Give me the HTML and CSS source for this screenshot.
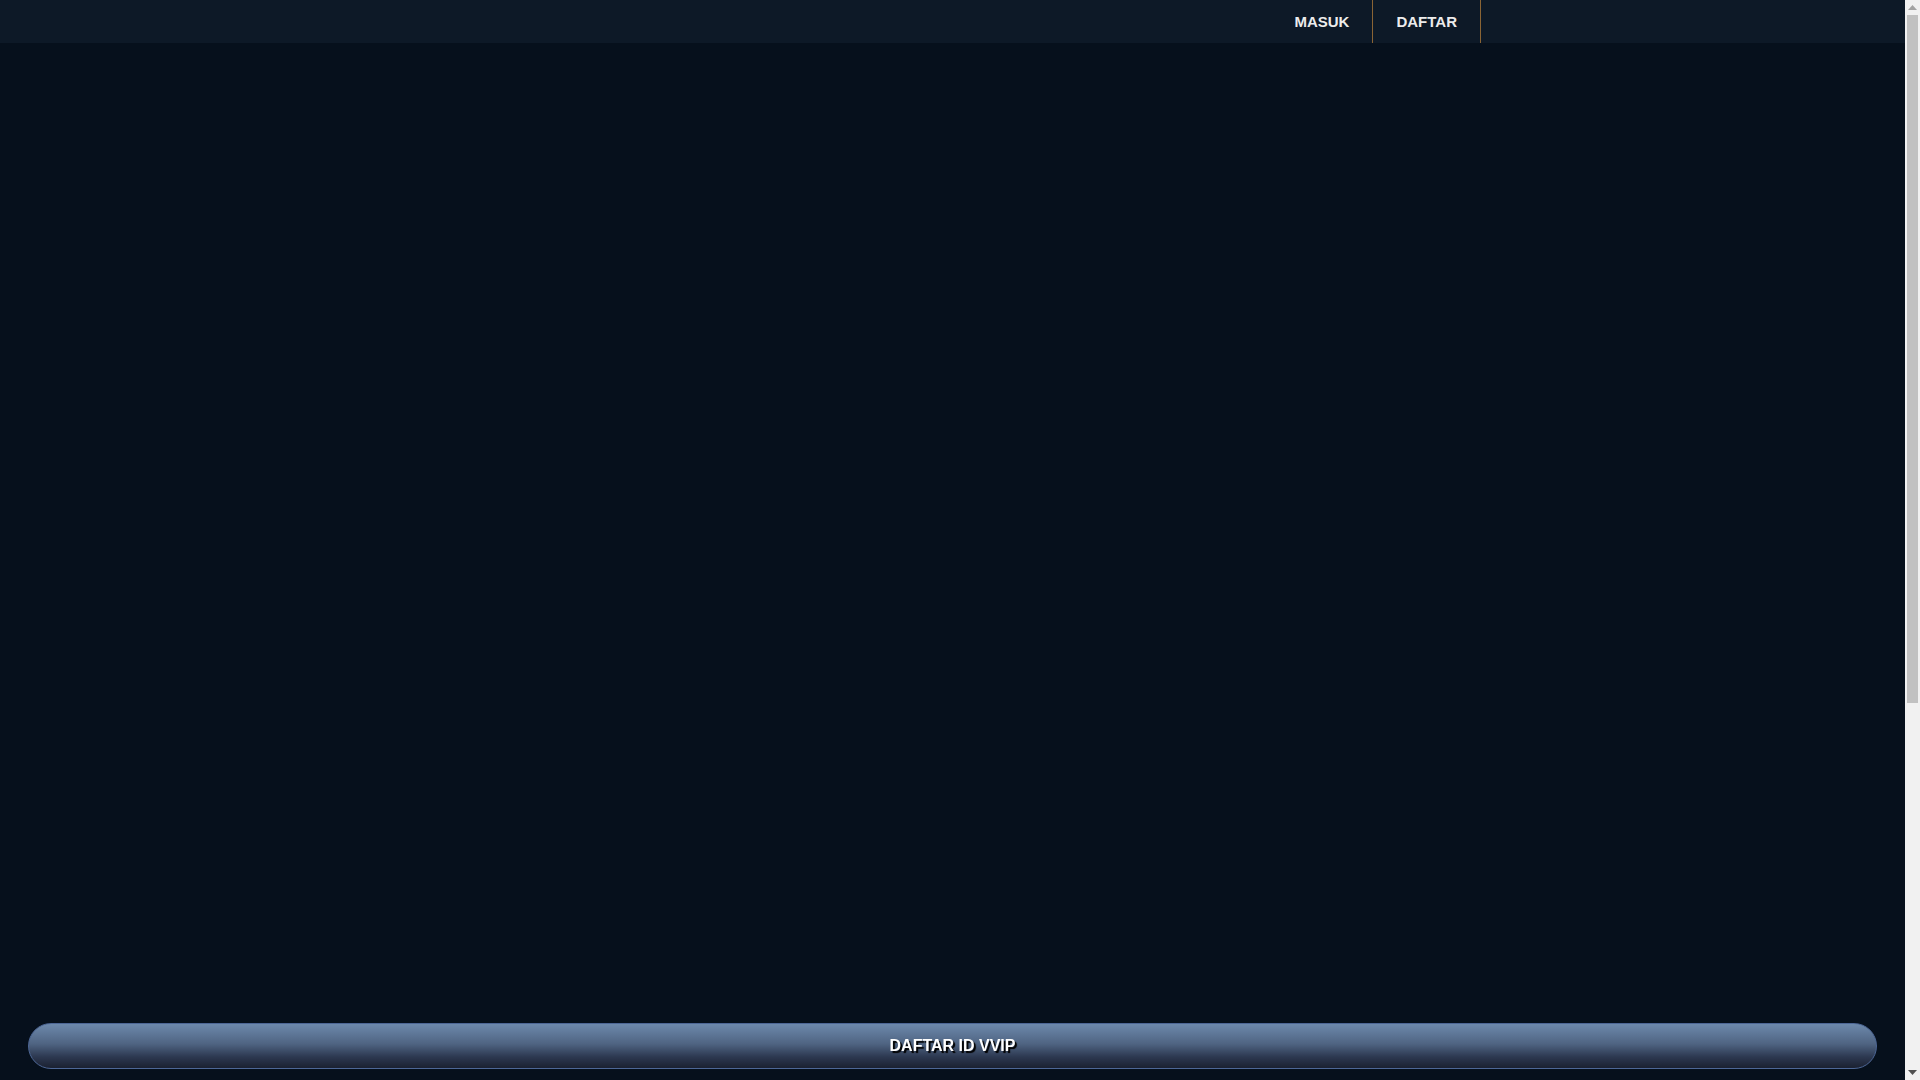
FILE: index.html
```html
<!DOCTYPE html>
<html lang="id">
<head>
<meta charset="utf-8">
<title>DAFTAR ID VVIP</title>
<link rel="stylesheet" href="styles.css">
</head>
<body>
<header class="topbar">
  <div class="spacer"></div>
  <nav class="nav">
    <a class="nav-item" href="#">MASUK</a>
    <a class="nav-item nav-item--bordered" href="#">DAFTAR</a>
  </nav>
  <div class="nav-tail"></div>
</header>
<main class="content"></main>
<div class="cta-bar">
  <a class="cta" href="#">DAFTAR ID VVIP</a>
</div>
<div class="scrollbar" aria-hidden="true">
  <div class="sb-btn">
    <svg width="9" height="5" viewBox="0 0 9 5"><polygon points="0,5 9,5 4.5,0" fill="#a3a3a3"/></svg>
  </div>
  <div class="sb-track">
    <div class="sb-thumb"></div>
  </div>
  <div class="sb-btn">
    <svg width="9" height="5" viewBox="0 0 9 5"><polygon points="0,0 9,0 4.5,5" fill="#505050"/></svg>
  </div>
</div>
</body>
</html>
```

FILE: styles.css
```css
html, body {
  margin: 0;
  padding: 0;
}
body {
  background: #06101c;
  font-family: "Liberation Sans", Arial, sans-serif;
  color: #ececec;
}
.topbar {
  display: flex;
  height: 43px;
  background: #0d1927;
}
.spacer {
  flex: 1;
}
.nav {
  display: flex;
  height: 43px;
}
.nav-tail {
  width: 439px;
}
.nav-item {
  display: flex;
  align-items: center;
  padding: 0 23px 1px;
  font-size: 15px;
  font-weight: bold;
  color: #ececec;
  text-decoration: none;
}
.nav-item--bordered {
  border-left: 1px solid #8a6434;
  border-right: 1px solid #8a6434;
}
.content {
  height: 1603px;
}
.cta-bar {
  position: fixed;
  left: 28px;
  right: 43px;
  bottom: 11px;
}
.cta {
  display: flex;
  align-items: center;
  justify-content: center;
  height: 44px;
  border: 1px solid #4d6796;
  border-radius: 23px;
  background: linear-gradient(to bottom, #6d89ac 0%, #4f6482 45%, #2c3850 75%, #1b2131 100%);
  color: #ffffff;
  font-size: 16px;
  font-weight: bold;
  text-decoration: none;
  text-shadow: 2px 2px 1px #000000;
}
.scrollbar {
  position: fixed;
  top: 0;
  right: 0;
  bottom: 0;
  width: 15px;
  background: #f1f1f1;
  display: flex;
  flex-direction: column;
}
.sb-btn {
  height: 15px;
  display: flex;
  align-items: center;
  justify-content: center;
}
.sb-track {
  flex: 1;
  padding: 0 2px;
}
.sb-thumb {
  height: 688px;
  background: #c1c1c1;
}
```
